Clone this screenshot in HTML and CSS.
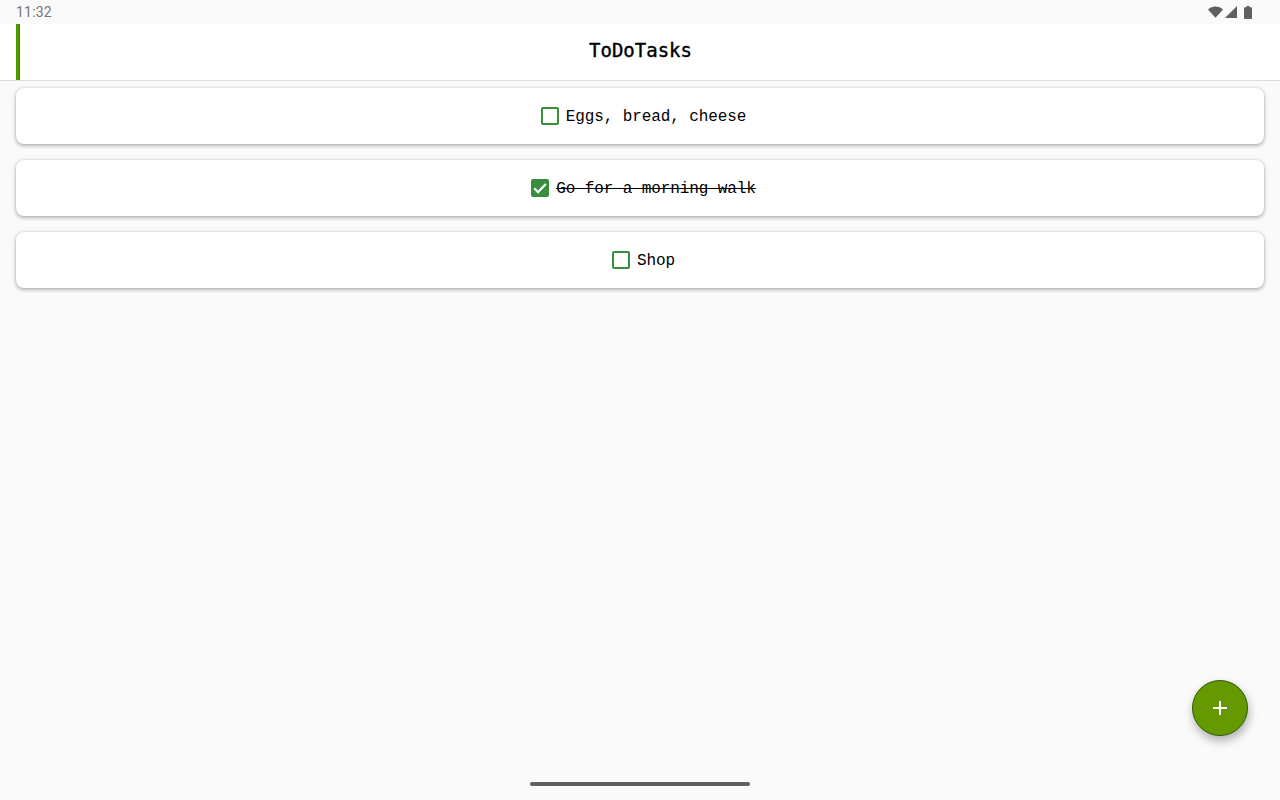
FILE: index.html
```html
<!DOCTYPE html>
<html>
<head>
  <meta charset="utf-8">
  <meta name="viewport" content="width=device-width">
  <title>ToDoTasks</title>

  <link rel="stylesheet" href="styles.css">

</head>
<body>
  <div id="content">

    <div class="statusBar">
      <span class="clock">11:32</span>
      <div class="statusIcons">
        <svg class="wifi" width="15" height="12" viewBox="0 0 16 12"><path d="M0 3.200C2 1.200 5 0 8 0s6 1.200 8 3.200L8 12z" fill="#5f5f5f"/></svg>
        <svg class="signal" width="12" height="12" viewBox="0 0 12 12"><path d="M12 0v12H0z" fill="#5f5f5f"/></svg>
        <svg width="8" height="13" viewBox="0 0 8 13"><path d="M2.500 0h3v1.200H7a1 1 0 0 1 1 1V12a1 1 0 0 1-1 1H1a1 1 0 0 1-1-1V2.200a1 1 0 0 1 1-1h1.500z" fill="#5f5f5f"/></svg>
      </div>
    </div>

    <div class="header">
      <span class="accent"></span>
      <h1>ToDoTasks</h1>
    </div>

    <ul id="list">
      <li>
        <span class="box"></span>
        <span class="taskText">Eggs, bread, cheese</span>
      </li>
      <li class="checked">
        <span class="box">
          <svg width="18" height="18" viewBox="0 0 18 18"><path d="M3.200 9.200l3.900 3.900 7.700-8" fill="none" stroke="#fff" stroke-width="2.200"/></svg>
        </span>
        <span class="taskText">Go for a morning walk</span>
      </li>
      <li>
        <span class="box"></span>
        <span class="taskText">Shop</span>
      </li>
    </ul>

    <div class="addBtn">
      <svg width="14" height="14" viewBox="0 0 14 14"><path d="M7 0v14M0 7h14" stroke="#fff" stroke-width="2"/></svg>
    </div>

    <div class="homeBar"></div>
  </div>
</body>
</html>
```

FILE: styles.css
```css
* {
  box-sizing: border-box;
}

html, body {
  margin: 0;
  height: 100%;
}

#content {
  position: relative;
  height: 800px;
  overflow: hidden;
  background: #fafafa;
  font-family: "Liberation Mono", monospace;
  color: #000;
}

.statusBar {
  display: flex;
  justify-content: space-between;
  align-items: center;
  height: 24px;
  padding: 0 28px 0 16px;
}

.clock {
  font-family: Roboto, sans-serif;
  font-size: 14px;
  letter-spacing: 0.2px;
  color: #757575;
}

.statusIcons {
  display: flex;
  align-items: center;
  padding-left: 1px;
}

.signal {
  margin: 0 7px 0 2px;
}

.header {
  position: relative;
  display: flex;
  justify-content: center;
  align-items: center;
  height: 57px;
  background: #fff;
  border-bottom: 1px solid #dcdcdc;
}

.accent {
  position: absolute;
  left: 16px;
  top: 0;
  bottom: 0;
  width: 4px;
  background: #4a9a00;
  border-right: 1px solid #3a8a00;
}

h1 {
  margin: 0 0 4px 1px;
  font-family: "DejaVu Sans Mono", monospace;
  font-size: 19px;
  font-weight: normal;
  -webkit-text-stroke: 0.4px #000;
}

ul {
  margin: 0;
  padding: 7px 16px 0;
  list-style-type: none;
  display: flex;
  flex-direction: column;
  gap: 16px;
}

ul li {
  display: flex;
  justify-content: center;
  align-items: center;
  gap: 7px;
  height: 56px;
  padding-left: 7px;
  background: #fff;
  border-radius: 8px;
  font-size: 16px;
  box-shadow: 0 2px 4px rgba(0, 0, 0, 0.25), 0 0 3px rgba(0, 0, 0, 0.16);
}

.box {
  display: flex;
  width: 18px;
  height: 18px;
  border: 2px solid #388e3c;
  border-radius: 2px;
}

.checked .box {
  border: none;
  background: #388e3c;
}

.taskText {
  margin-top: 2px;
  letter-spacing: -0.09px;
}

.checked .taskText {
  text-decoration: line-through;
}

.addBtn {
  position: absolute;
  left: 1192px;
  top: 680px;
  display: flex;
  justify-content: center;
  align-items: center;
  width: 56px;
  height: 56px;
  border-radius: 50%;
  background: #669900;
  border: 1px solid #2f5a00;
  box-shadow: 1px 5px 10px rgba(0, 0, 0, 0.3);
}

.homeBar {
  position: absolute;
  left: 530px;
  top: 782px;
  width: 220px;
  height: 4px;
  border-radius: 2px;
  background: #606060;
}
```
